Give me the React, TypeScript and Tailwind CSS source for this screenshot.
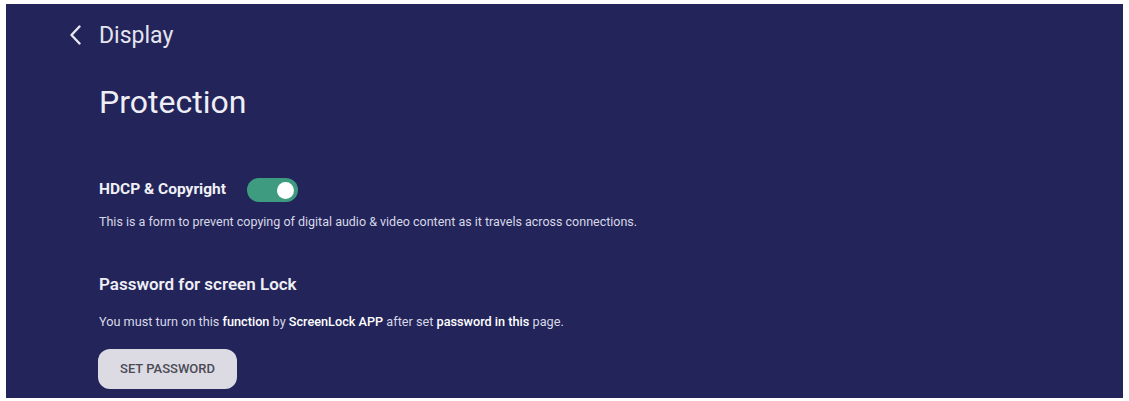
export default function App() {
  return (
    <div className="w-[1129px] h-[401px] bg-white pl-[6px] pt-[4px] pr-[6px] pb-[3px]" style={{ fontFamily: 'Roboto, "Noto Sans", sans-serif' }}>
      <div className="w-full h-full bg-[#22245a] flex flex-col pl-[64px]">
        <div className="flex items-center mt-[19px] h-[24px]">
          <svg width="12" height="20" viewBox="0 0 12 20">
            <path d="M9.5 1.5 L1.5 10 L9.5 18.5" fill="none" stroke="#e8e8f0" strokeWidth="2.4" strokeLinecap="round" strokeLinejoin="round" />
          </svg>
          <span className="ml-[17px] text-[23px] text-[#e4e4ee] leading-none">Display</span>
        </div>
        <div className="mt-[39px] ml-[29px] text-[32px] text-[#eeeef4] leading-none">Protection</div>
        <div className="ml-[29px] mt-[60px] flex items-center h-[24px]">
          <span className="text-[15.5px] font-bold text-[#f0f0f6]">HDCP &amp; Copyright</span>
          <div className="ml-[21px] w-[51px] h-[24px] rounded-full bg-[#3f9b80] flex items-center justify-end pr-[4px]">
            <div className="w-[17px] h-[17px] rounded-full bg-white" />
          </div>
        </div>
        <div className="ml-[29px] mt-[14px] text-[12.5px] text-[#d8d8e6] leading-none">
          This is a form to prevent copying of digital audio &amp; video content as it travels across connections.
        </div>
        <div className="ml-[29px] mt-[47px] text-[17px] font-semibold text-[#eeeef4] leading-none">Password for screen Lock</div>
        <div className="ml-[29px] mt-[23px] text-[12.7px] text-[#d8d8e6] leading-none">
          You must turn on this <span className="font-medium text-white">function</span> by <span className="font-medium text-white">ScreenLock APP</span> after set <span className="font-medium text-white">password</span> <span className="font-medium text-white">in this</span> page.
        </div>
        <div className="ml-[28px] mt-[21px] w-[139px] h-[40px] rounded-[12px] bg-[#dcdae3] flex items-center justify-center">
          <span className="text-[13px] font-medium text-[#4a4a55]">SET PASSWORD</span>
        </div>
      </div>
    </div>
  );
}
